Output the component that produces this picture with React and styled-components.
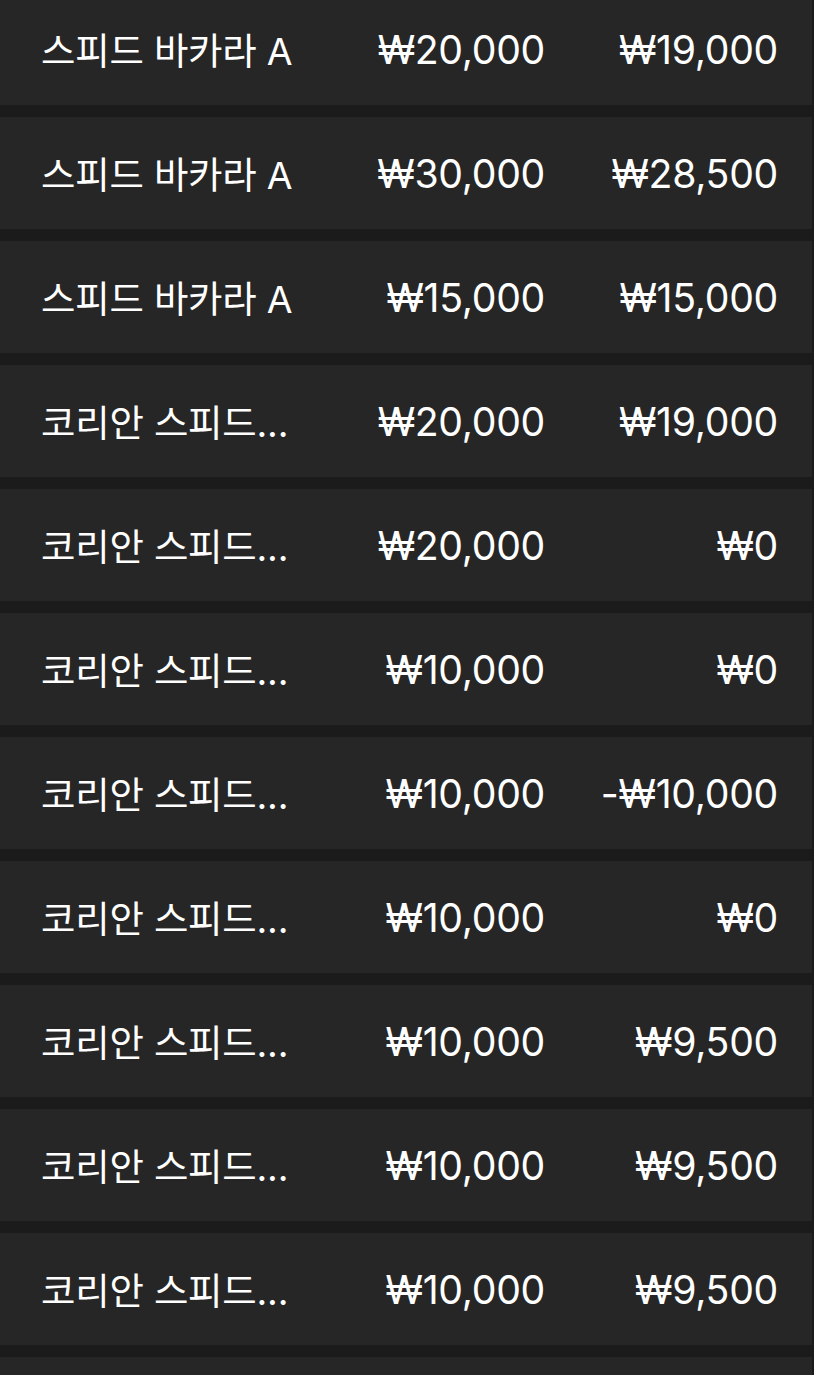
import styled, { createGlobalStyle } from "styled-components";

const GlobalStyle = createGlobalStyle`
  html, body {
    margin: 0;
    padding: 0;
    background: #1b1b1b;
    overflow: hidden;
  }
  body {
    font-family: Inter, "Noto Sans CJK KR", sans-serif;
    color: #ffffff;
    -webkit-font-smoothing: antialiased;
  }
`;

const List = styled.ul`
  list-style: none;
  margin: -7px 2px 0 0;
  padding: 0;
  display: flex;
  flex-direction: column;
  gap: 12px;
`;

const Row = styled.li`
  height: 112px;
  background: #262626;
  display: grid;
  grid-template-columns: 256px 248px 233px;
  align-items: center;
  padding: 0 34px 0 41px;
  box-sizing: border-box;
`;

const Name = styled.span`
  font-size: 37.4px;
  font-weight: 400;
  white-space: nowrap;
  overflow: hidden;
  letter-spacing: -0.2px;
`;

const Amount = styled.span`
  font-size: 39.2px;
  font-weight: 400;
  text-align: right;
  white-space: nowrap;
  letter-spacing: -0.3px;
`;

const rows = [
  ["스피드 바카라 A", 20000, 19000],
  ["스피드 바카라 A", 30000, 28500],
  ["스피드 바카라 A", 15000, 15000],
  ["코리안 스피드 바카라", 20000, 19000],
  ["코리안 스피드 바카라", 20000, 0],
  ["코리안 스피드 바카라", 10000, 0],
  ["코리안 스피드 바카라", 10000, -10000],
  ["코리안 스피드 바카라", 10000, 0],
  ["코리안 스피드 바카라", 10000, 9500],
  ["코리안 스피드 바카라", 10000, 9500],
  ["코리안 스피드 바카라", 10000, 9500],
  ["코리안 스피드 바카라", 10000, 9500],
];

const won = (n) =>
  (n < 0 ? "-" : "") + "₩" + Math.abs(n).toLocaleString("en-US");

const shorten = (name) => (name.length > 9 ? name.slice(0, 7) + "..." : name);

export default function App() {
  return (
    <>
      <GlobalStyle />
      <List>
        {rows.map(([name, bet, result], i) => (
          <Row key={i}>
            <Name>{shorten(name)}</Name>
            <Amount>{won(bet)}</Amount>
            <Amount>{won(result)}</Amount>
          </Row>
        ))}
      </List>
    </>
  );
}
